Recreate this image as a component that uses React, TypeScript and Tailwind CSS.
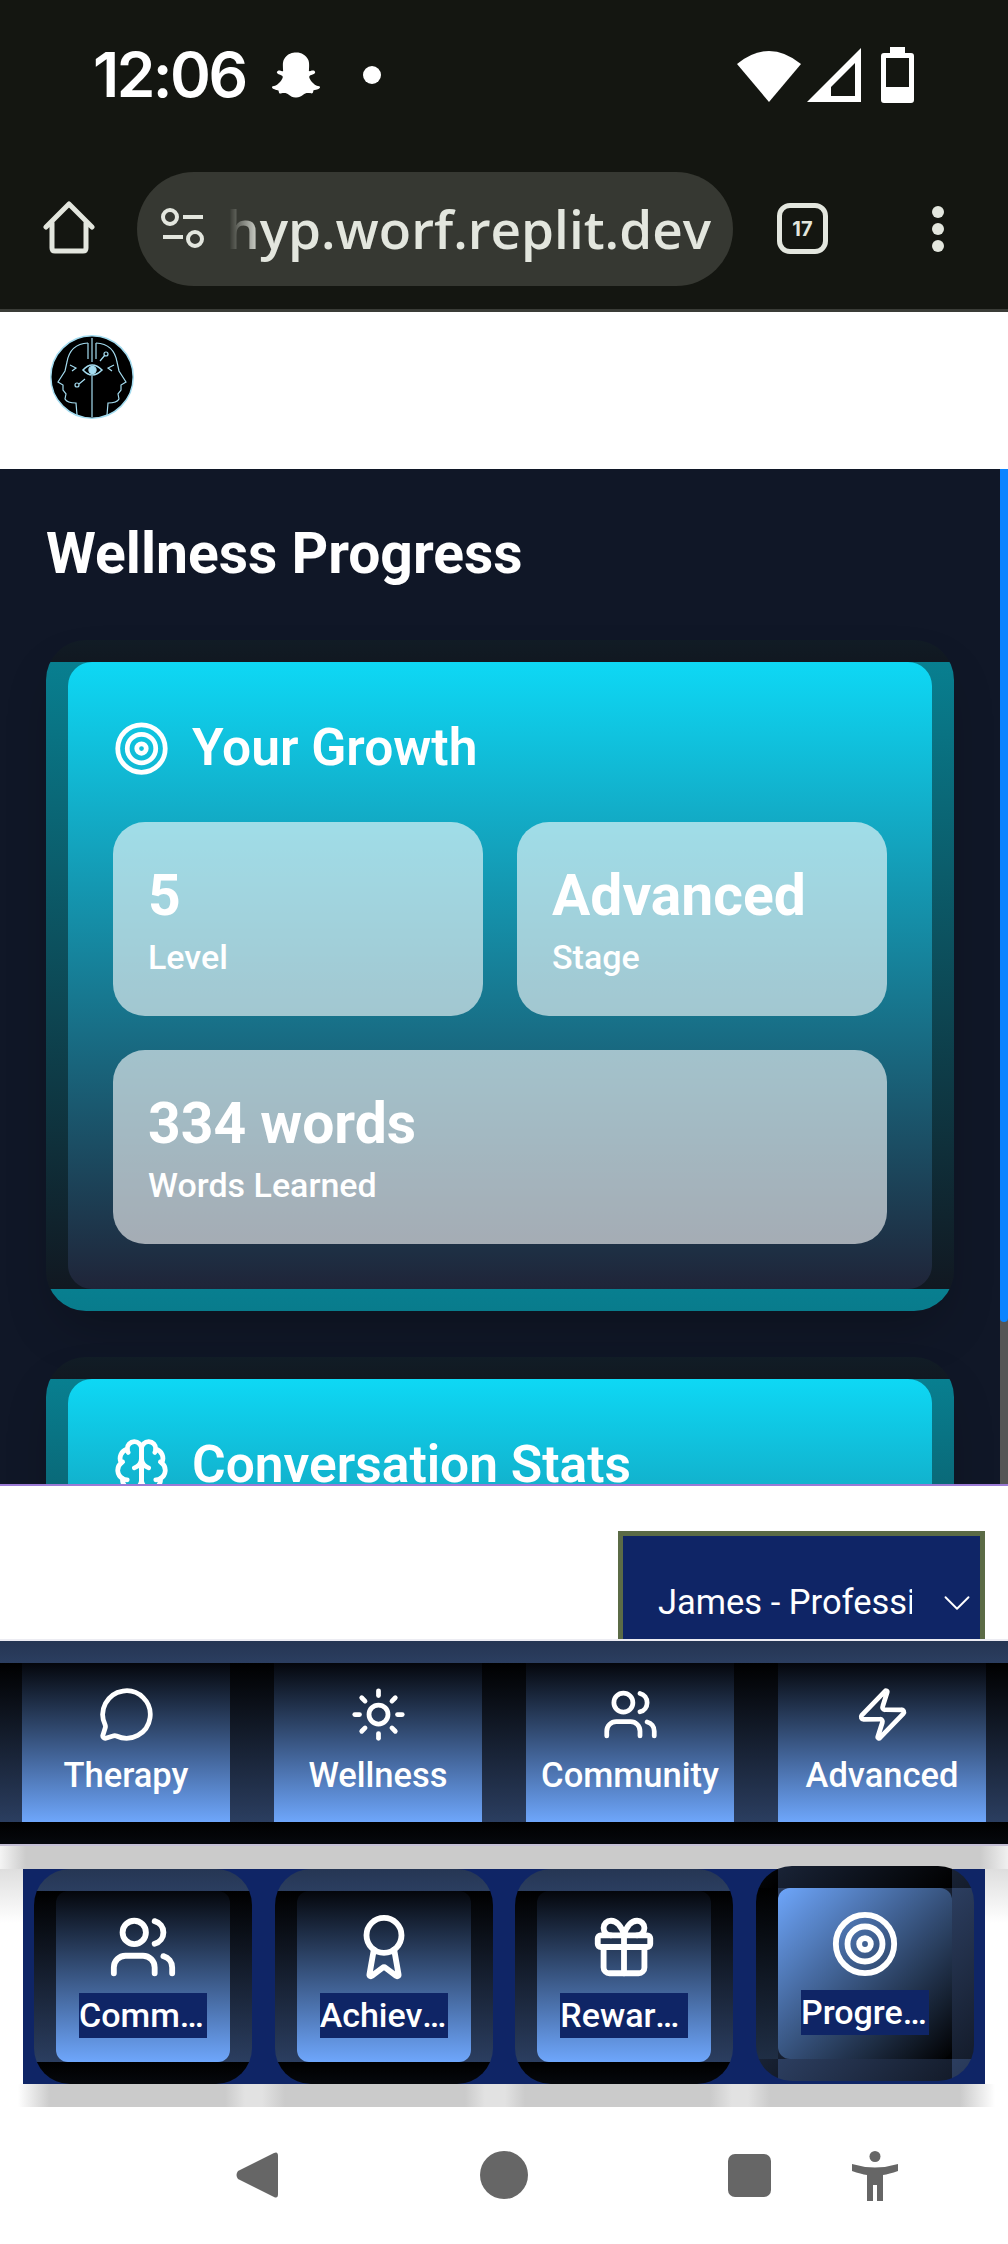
import { Award, ChevronDown, Gift, MessageCircle, Sun, Target, Users, Zap } from "lucide-react";
import type { LucideIcon } from "lucide-react";
import type { ComponentType } from "react";
import { FaSnapchatGhost } from "react-icons/fa";

type IconProps = { size?: number; color?: string; className?: string };

const topTabs: { label: string; icon: LucideIcon }[] = [
  { label: "Therapy", icon: MessageCircle },
  { label: "Wellness", icon: Sun },
  { label: "Community", icon: Users },
  { label: "Advanced", icon: Zap },
];

const subTabs: { label: string; icon: LucideIcon; active?: boolean }[] = [
  { label: "Community", icon: Users },
  { label: "Achievements", icon: Award },
  { label: "Rewards", icon: Gift },
  { label: "Progress", icon: Target, active: true },
];

// the brain in the picture has the arrow shaped centre, newer lucide redrew it
const BrainIcon = ({ size = 24, color = "currentColor", className }: IconProps) => (
  <svg
    width={size}
    height={size}
    viewBox="0 0 24 24"
    fill="none"
    stroke={color}
    strokeWidth="2"
    strokeLinecap="round"
    strokeLinejoin="round"
    className={className}
  >
    <path d="M12 5a3 3 0 1 0-5.997.125 4 4 0 0 0-2.526 5.77 4 4 0 0 0 .556 6.588A4 4 0 1 0 12 18Z" />
    <path d="M12 5a3 3 0 1 1 5.997.125 4 4 0 0 1 2.526 5.77 4 4 0 0 1-.556 6.588A4 4 0 1 1 12 18Z" />
    <path d="M15 13a4.5 4.5 0 0 1-3-4 4.5 4.5 0 0 1-3 4" />
    <path d="M17.599 6.5a3 3 0 0 0 .399-1.375" />
    <path d="M6.003 5.125A3 3 0 0 0 6.401 6.5" />
    <path d="M3.477 10.896a4 4 0 0 1 .585-.396" />
    <path d="M19.938 10.5a4 4 0 0 1 .585.396" />
    <path d="M6 18a4 4 0 0 1-1.967-.516" />
    <path d="M19.967 17.484A4 4 0 0 1 18 18" />
    <path d="M12 9v9" />
  </svg>
);

const StatusBar = () => (
  <div className="flex h-[137px] items-center pl-[93px] pr-[92px] pt-[12px]">
    <span className="w-[156px] font-['Inter',sans-serif] text-[62px] font-semibold leading-none tracking-[-2.5px] text-white">
      12:06
    </span>
    <FaSnapchatGhost size={48} className="ml-[23px] text-white" />
    <div className="ml-[43px] h-[18px] w-[18px] rounded-full bg-white" />
    <div className="ml-auto flex items-center gap-[6px]">
      <svg width="64" height="54" viewBox="0 0 64 54">
        <path d="M0 16 Q32 -10 64 16 L32 54 Z" fill="#fff" />
      </svg>
      <svg width="54" height="54" viewBox="0 0 54 54">
        <path d="M0 54 L54 0 V54 Z M24 48 H48 V15 L24 39 Z" fill="#fff" fillRule="evenodd" />
      </svg>
      <svg width="33" height="56" viewBox="0 0 33 56" className="ml-[14px] mr-[2px]">
        <path
          d="M9 0 H24 V6 H30 Q33 6 33 9 V53 Q33 56 30 56 H3 Q0 56 0 53 V9 Q0 6 3 6 H9 Z M5 11 V40 H28 V11 Z"
          fill="#fff"
          fillRule="evenodd"
        />
      </svg>
    </div>
  </div>
);

const BrowserBar = () => (
  <div className="flex h-[175px] items-start border-b-[3px] border-[#3a3c37] pl-[43px] pt-[35px]">
    <svg width="54" height="54" viewBox="0 0 54 54" className="mt-[29px]" fill="none" stroke="#e3e6de" strokeWidth="5" strokeLinejoin="round">
      <path d="M3 26 L26 3 L49 26 M9 22 V47 Q9 50 12 50 H40 Q43 50 43 47 V22" strokeLinecap="round" />
    </svg>
    <div className="ml-[40px] flex h-[114px] w-[596px] items-center rounded-full bg-[#363832] pl-[24px] pr-[22px]">
      <svg width="44" height="42" viewBox="0 0 44 42" className="shrink-0" fill="none" stroke="#e3e6de" strokeWidth="4">
        <circle cx="9" cy="9" r="7" />
        <path d="M22 9 H42 M2 29 H22" />
        <circle cx="34" cy="31" r="7" />
      </svg>
      <div className="ml-[24px] flex min-w-0 flex-1 justify-end overflow-hidden [mask-image:linear-gradient(90deg,transparent,black_32px)]">
        <span className="whitespace-nowrap font-['Open_Sans',sans-serif] text-[53px] font-semibold leading-[66px] text-[#e3e6de]">
          hyp.worf.replit.dev
        </span>
      </div>
    </div>
    <div className="ml-[44px] mt-[31px] flex h-[51px] w-[51px] items-center justify-center rounded-[13px] border-[5px] border-[#e3e6de]">
      <span className="font-['Inter',sans-serif] text-[20px] font-bold leading-none text-[#e3e6de]">17</span>
    </div>
    <div className="ml-[104px] mt-[34px] flex flex-col gap-[5px]">
      <div className="h-[12px] w-[12px] rounded-full bg-[#e3e6de]" />
      <div className="h-[12px] w-[12px] rounded-full bg-[#e3e6de]" />
      <div className="h-[12px] w-[12px] rounded-full bg-[#e3e6de]" />
    </div>
  </div>
);

const Logo = () => (
  <svg width="84" height="84" viewBox="0 0 84 84" fill="none" stroke="#a4dcf0" strokeWidth="1.2">
    <circle cx="42" cy="42" r="41.2" fill="#000" strokeWidth="1.5" />
    <path d="M42 3 V27 M42 41 V82" />
    <path d="M38 8 Q20 9 17 27 L15 36 L8 47 L13 50 L13 55 L16 59 L15 64 Q17 68 26 68 L27 80" />
    <path d="M46 8 Q64 9 67 27 L69 36 L76 47 L71 50 L71 55 L68 59 L69 64 Q67 68 58 68 L57 80" />
    <path d="M38 8 V24 M46 8 V24" />
    <path d="M33 35 Q42 25 52 35 Q42 45 33 35 Z" strokeWidth="1.6" />
    <circle cx="42.5" cy="35" r="3.6" fill="#a4dcf0" />
    <path d="M50 26 L55 20 M35 44 L29 49 M20 30 L26 33 L22 36 M64 30 L58 33 L62 36" />
    <circle cx="56" cy="19" r="2" />
    <circle cx="27" cy="50" r="2" />
  </svg>
);

const Stat = ({ value, label, wide }: { value: string; label: string; wide?: boolean }) => (
  <div className={`h-[194px] rounded-[32px] bg-white/60 px-[35px] pt-[38px] ${wide ? "col-span-2" : ""}`}>
    <div className="text-[57px] font-bold leading-[72px] text-white">{value}</div>
    <div className="text-[34px] font-medium leading-[50px] text-white">{label}</div>
  </div>
);

const Card = ({ title, icon: Icon, children }: { title: string; icon: ComponentType<IconProps>; children?: React.ReactNode }) => (
  <div className="rounded-[40px] border-[22px] border-transparent bg-linear-to-b/srgb from-[#087f90] to-[#111821] shadow-[0_25px_50px_-12px_rgba(0,0,0,0.25)]">
    <div className="rounded-[24px] bg-linear-to-b/srgb from-[#0ed8f5] to-[#1f2438] p-[45px]">
      <div className="mb-[33px] flex h-[82px] items-center gap-[22px]">
        <Icon size={57} color="#fff" className="shrink-0" />
        <h2 className="text-[51.5px] font-semibold leading-[60px] text-white">{title}</h2>
      </div>
      {children}
    </div>
  </div>
);

const TopTab = ({ label, icon: Icon }: { label: string; icon: LucideIcon }) => (
  <button className="border-[22px] border-transparent bg-linear-to-b/srgb from-black to-[#2b3e60]">
    <div className="flex h-[159px] flex-col items-center bg-linear-to-b/srgb from-[#04060b] to-[#6ea6fb] pt-[23px]">
      <Icon size={57} color="#fff" />
      <span className="mt-[10px] text-[34.5px] font-medium leading-[45px] text-white">{label}</span>
    </div>
  </button>
);

const SubTab = ({ label, icon: Icon, active }: { label: string; icon: LucideIcon; active?: boolean }) => (
  <button
    className={`rounded-[36px] border-[22px] border-transparent ${
      active
        ? "-translate-y-[3px] [background:linear-gradient(180deg,#000,#1f2e45)_-22px_0/22px_100%_no-repeat,linear-gradient(135deg,#2c3e60,#000)]"
        : "bg-linear-to-b/srgb from-black to-[#2b3e60]"
    }`}
  >
    <div
      className={`flex h-[171px] flex-col items-center rounded-[12px] pt-[21px] ${
        active ? "bg-linear-to-br/srgb from-[#6ea6fb] to-black" : "bg-linear-to-b/srgb from-[#04060b] to-[#6ea6fb]"
      }`}
    >
      <Icon size={70} color="#fff" />
      <span className="mt-[11px] w-[128px] truncate bg-[#0f2566] text-left text-[34px] font-medium leading-[45px] text-white">
        {label}
      </span>
    </div>
  </button>
);

const NavBar = () => (
  <div className="flex h-[137px] items-start bg-white pl-[236px] pt-[44px]">
    <svg width="42" height="48" viewBox="0 0 42 48">
      <path d="M38 2 Q42 0 42 5 V43 Q42 48 38 46 L2 28 Q-1 24 2 20 Z" fill="#666" />
    </svg>
    <div className="ml-[202px] h-[48px] w-[48px] rounded-full bg-[#666]" />
    <div className="ml-[200px] mt-[3px] h-[43px] w-[43px] rounded-[7px] bg-[#666]" />
    <svg width="46" height="50" viewBox="0 0 46 50" className="ml-[81px]">
      <circle cx="23" cy="5.5" r="5.5" fill="#666" />
      <path d="M0 13 Q23 20 46 13 V20 Q37 23 31 24 V50 H25 V34 H21 V50 H15 V24 Q9 23 0 20 Z" fill="#666" />
    </svg>
  </div>
);

export default function App() {
  return (
    <div className="flex h-[2244px] w-[1008px] flex-col overflow-hidden bg-white font-['Roboto',sans-serif]">
      <div className="bg-[#141611]">
        <StatusBar />
        <BrowserBar />
      </div>

      <header className="h-[157px] pl-[50px] pt-[23px]">
        <Logo />
      </header>

      <main className="relative h-[1015px] overflow-hidden bg-[#101727] pl-[46px] pr-[54px] pt-[57px]">
        <h1 className="mb-[58px] text-[57px] font-bold leading-[56px] text-white">Wellness Progress</h1>
        <div className="flex flex-col gap-[46px]">
          <Card title="Your Growth" icon={Target}>
            <div className="grid grid-cols-2 gap-[34px]">
              <Stat value="5" label="Level" />
              <Stat value="Advanced" label="Stage" />
              <Stat value="334 words" label="Words Learned" wide />
            </div>
          </Card>
          <Card title="Conversation Stats" icon={BrainIcon}>
            <div className="h-[300px]" />
          </Card>
        </div>
        <div className="absolute right-0 top-0 flex h-full w-[8px] flex-col bg-[#555]">
          <div className="h-[853px] rounded-b-full bg-[#0a84ff]" />
        </div>
      </main>

      <div className="flex h-[155px] justify-end border-t-2 border-[#9b7ad6] pr-[23px] pt-[45px]">
        <div className="flex h-[108px] w-[367px] items-start border-[5px] border-b-0 border-[#5b6b46] bg-[#0f2566] pl-[35px] pt-[44px]">
          <span className="w-[254px] shrink-0 overflow-hidden whitespace-nowrap text-[34.5px] leading-[45px] text-white">
            James - Professional
          </span>
          <ChevronDown size={46} color="#fff" strokeWidth={1} className="ml-[22px] shrink-0" />
        </div>
      </div>

      <nav className="grid h-[205px] grid-cols-4 border-t-2 border-[#ececf2]">
        {topTabs.map((tab) => (
          <TopTab key={tab.label} {...tab} />
        ))}
      </nav>

      <div className="flex h-[263px] flex-col border-t-2 border-[#c4c0d6]">
        <div className="h-[23px] bg-[linear-gradient(90deg,#f4f4f4,#cbcbcb_26px,#cbcbcb_980px,#f0f0f0)]" />
        <div className="bg-linear-to-b/srgb from-[#dedede] to-white to-25% px-[23px]">
          <div className="grid grid-cols-4 gap-[22.5px] bg-[#0f2566] px-[11px]">
            {subTabs.map((tab) => (
              <SubTab key={tab.label} {...tab} />
            ))}
          </div>
        </div>
        <div className="h-[23px] bg-[linear-gradient(90deg,#fff_18px,#cbcbcb_50px,#cbcbcb_225px,#e2e2e2_245px,#e2e2e2_262px,#cbcbcb_285px,#cbcbcb_465px,#e2e2e2_485px,#e2e2e2_505px,#cbcbcb_525px,#cbcbcb_710px,#e2e2e2_732px,#e2e2e2_748px,#cbcbcb_770px,#cbcbcb_960px,#fff_995px)]" />
      </div>

      <NavBar />
    </div>
  );
}
